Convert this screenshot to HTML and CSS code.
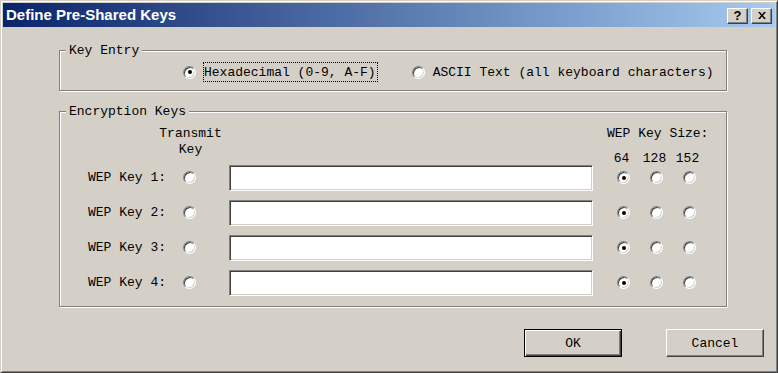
FILE: index.html
```html
<!DOCTYPE html>
<html lang="en">
<head>
    <meta charset="UTF-8">
    <title>Define Pre-Shared Keys</title>
    <link rel="stylesheet" href="styles.css">
</head>
<body>
    <div class="window">
        <div class="titlebar">
            <span class="title">Define Pre-Shared Keys</span>
            <div class="caption-buttons">
                <span class="cap-btn help">?</span>
                <span class="cap-btn close">
                    <svg width="8" height="7" viewBox="0 0 8 7"><path d="M0 0h2l2 2.5L6 0h2L5 3.5 8 7H6L4 4.5 2 7H0l3-3.5z" fill="#000"/></svg>
                </span>
            </div>
        </div>

        <div class="dialog">
            <div class="group key-entry">
                <span class="group-title">Key Entry</span>
                <div class="entry-row">
                    <label class="option hex"><span class="radio checked"></span><span class="focus">Hexadecimal (0-9, A-F)</span></label>
                    <label class="option ascii"><span class="radio"></span><span>ASCII Text (all keyboard characters)</span></label>
                </div>
            </div>

            <div class="group keys">
                <span class="group-title">Encryption Keys</span>
                <div class="key-grid">
                    <div class="tx-head">Transmit<br>Key</div>
                    <div class="size-head">
                        WEP Key Size:
                        <div class="sizes"><span>64</span><span>128</span><span>152</span></div>
                    </div>

                    <span class="key-label">WEP Key 1:</span>
                    <span class="radio tx"></span>
                    <span class="field key-field"></span>
                    <span class="radio s64 checked"></span><span class="radio s128"></span><span class="radio s152"></span>

                    <span class="key-label">WEP Key 2:</span>
                    <span class="radio tx"></span>
                    <span class="field key-field"></span>
                    <span class="radio s64 checked"></span><span class="radio s128"></span><span class="radio s152"></span>

                    <span class="key-label">WEP Key 3:</span>
                    <span class="radio tx"></span>
                    <span class="field key-field"></span>
                    <span class="radio s64 checked"></span><span class="radio s128"></span><span class="radio s152"></span>

                    <span class="key-label">WEP Key 4:</span>
                    <span class="radio tx"></span>
                    <span class="field key-field"></span>
                    <span class="radio s64 checked"></span><span class="radio s128"></span><span class="radio s152"></span>
                </div>
            </div>

            <div class="actions">
                <button class="btn default">OK</button>
                <button class="btn">Cancel</button>
            </div>
        </div>
    </div>
</body>
</html>
```

FILE: styles.css
```css
body {
    margin: 0;
    background: #d4d0c8;
    font-family: "Liberation Mono", monospace;
    font-size: 13px;
    line-height: 16px;
    color: #000;
}
.window {
    width: 778px;
    height: 373px;
    box-sizing: border-box;
    padding: 2px;
    background: #d4d0c8;
    border: 1px solid;
    border-color: #d4d0c8 #404040 #404040 #d4d0c8;
    box-shadow: inset 1px 1px #fff, inset -1px -1px #808080;
}
.titlebar {
    height: 24px;
    display: flex;
    align-items: center;
    justify-content: space-between;
    background: linear-gradient(to right, #0a246a, #a6caf0);
}
.title {
    padding-left: 3px;
    color: #fff;
    font-family: "Liberation Sans", Arial, sans-serif;
    font-weight: bold;
    font-size: 15px;
    line-height: 24px;
}
.caption-buttons {
    display: flex;
    gap: 3px;
    padding: 1px 3px 0 0;
}
.cap-btn {
    width: 21px;
    height: 16px;
    box-sizing: border-box;
    display: flex;
    align-items: center;
    justify-content: center;
    background: #d4d0c8;
    border: 1px solid;
    border-color: #fff #404040 #404040 #fff;
    box-shadow: inset -1px -1px #808080;
}
.help {
    font-family: "Liberation Sans", Arial, sans-serif;
    font-weight: bold;
    font-size: 13px;
    line-height: 14px;
}
.dialog {
    padding: 23px 11px 0 56px;
}
.group {
    position: relative;
    width: 668px;
    box-sizing: border-box;
    border: 1px solid #808080;
    box-shadow: inset 1px 1px #fff, 1px 1px #fff;
}
.group-title {
    position: absolute;
    top: -8px;
    left: 6px;
    padding: 0 3px;
    background: #d4d0c8;
}
.key-entry {
    height: 41px;
}
.entry-row {
    display: flex;
    align-items: center;
    height: 39px;
    box-sizing: border-box;
    padding: 3px 0 0 123px;
}
.option {
    display: flex;
    align-items: center;
}
.hex .radio {
    margin-right: 7px;
}
.focus {
    border: 1px dotted #000;
    padding: 1px 1px 0 0;
    line-height: 17px;
}
.ascii {
    margin-left: 34px;
}
.ascii .radio {
    margin-right: 8px;
}
.ascii span:last-child {
    padding-top: 2px;
}
.radio {
    position: relative;
    width: 13px;
    height: 13px;
    box-sizing: border-box;
    border-radius: 50%;
    border: 1px solid;
    border-color: #808080 #fff #fff #808080;
    background: #fff;
    box-shadow: inset 1px 1px #404040, inset -1px -1px #d4d0c8;
}
.radio.checked::after {
    content: "";
    position: absolute;
    left: 3.5px;
    top: 3.5px;
    width: 4px;
    height: 4px;
    border-radius: 50%;
    background: #000;
}
.keys {
    height: 196px;
    margin-top: 20px;
}
.key-grid {
    display: grid;
    grid-template-columns: 89px 80px 364px 14px 33px 33px 33px;
    grid-template-rows: 48px repeat(4, 35px);
    align-items: center;
}
.tx-head {
    grid-column: 2;
    align-self: start;
    padding-top: 14px;
    padding-left: 3px;
    text-align: center;
}
.size-head {
    grid-column: 5 / span 3;
    align-self: start;
    padding-top: 14px;
    text-align: center;
    white-space: nowrap;
}
.sizes {
    display: grid;
    grid-template-columns: repeat(3, 33px);
    margin: 9px 0 0 -2px;
}
.key-label {
    grid-column: 1;
    padding: 1px 0 0 28px;
    white-space: nowrap;
}
.radio.tx {
    grid-column: 2;
    justify-self: center;
}
.key-field {
    grid-column: 3;
}
.s64 { grid-column: 5; justify-self: center; }
.s128 { grid-column: 6; justify-self: center; }
.s152 { grid-column: 7; justify-self: center; }
.field {
    height: 26px;
    box-sizing: border-box;
    background: #fff;
    border: 1px solid;
    border-color: #808080 #fff #fff #808080;
    box-shadow: inset 1px 1px #404040, inset -1px -1px #d4d0c8;
}
.actions {
    display: flex;
    justify-content: flex-end;
    gap: 44px;
    margin-top: 22px;
}
.btn {
    width: 98px;
    height: 28px;
    padding: 2px 0 0;
    font: inherit;
    color: #000;
    background: #d4d0c8;
    border: 1px solid;
    border-color: #fff #404040 #404040 #fff;
    box-shadow: inset -1px -1px #808080, inset 1px 1px #d4d0c8;
}
.btn.default {
    border-color: #000;
    box-shadow: inset 1px 1px #fff, inset -1px -1px #404040, inset -2px -2px #808080;
}
```
